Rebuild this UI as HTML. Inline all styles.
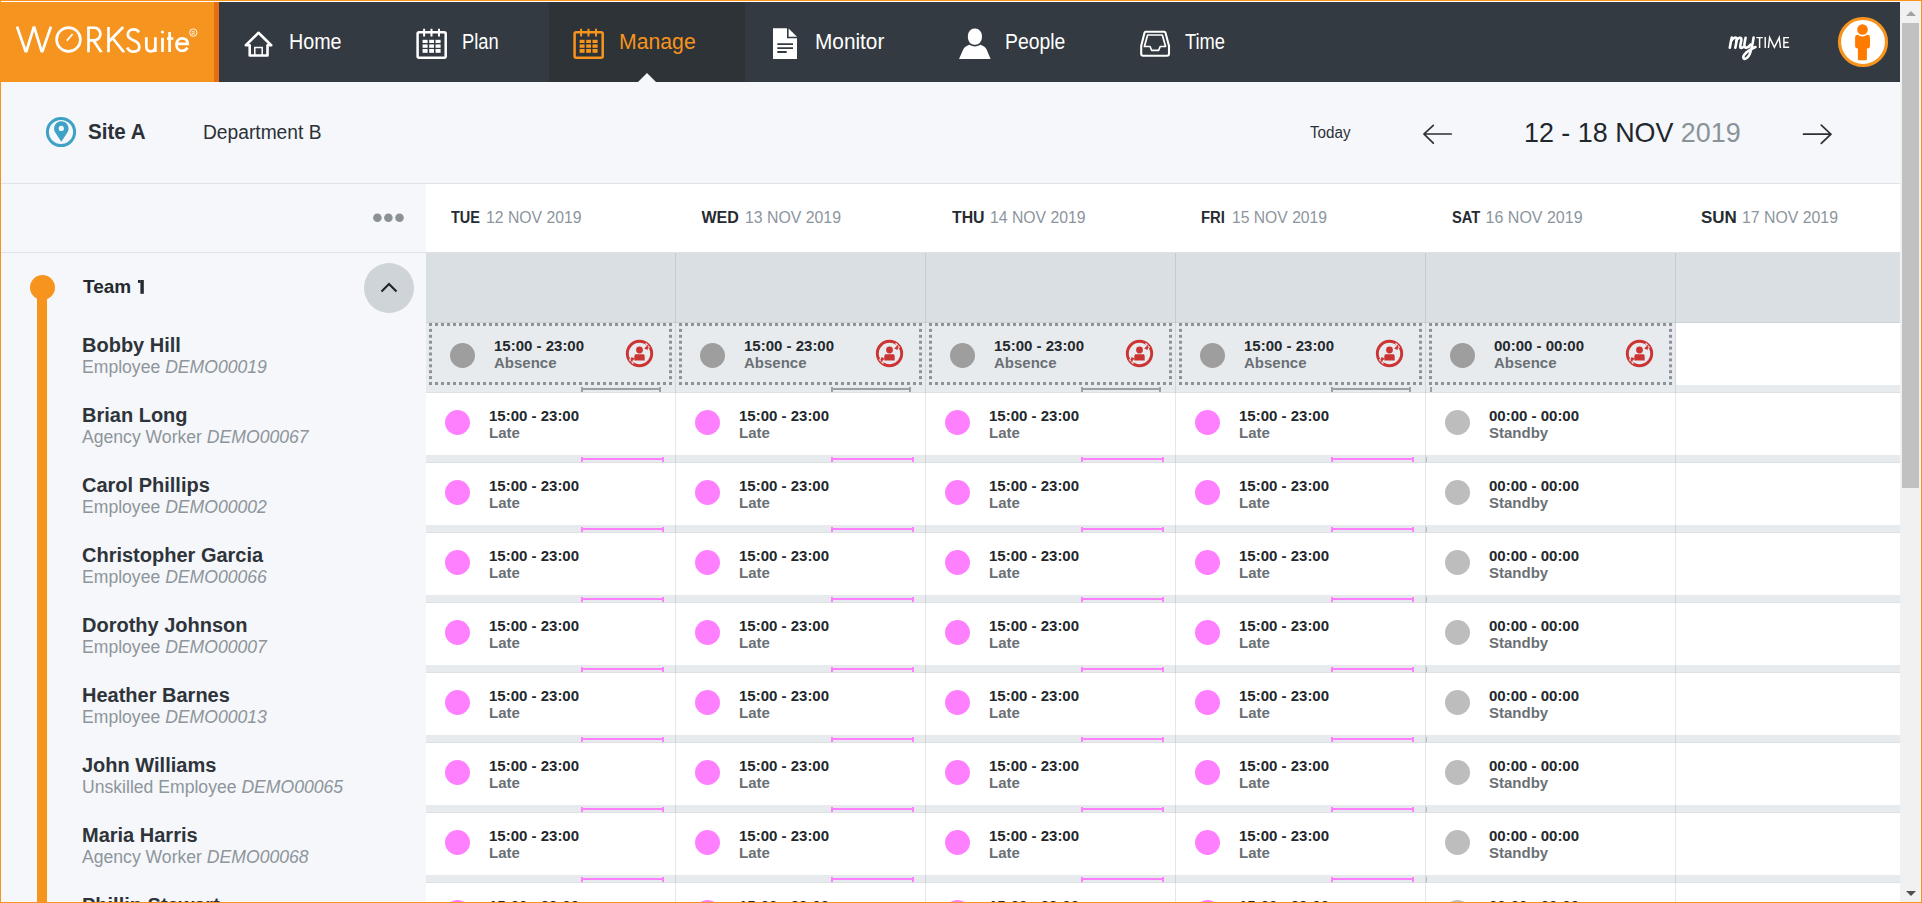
<!DOCTYPE html>
<html><head><meta charset="utf-8"><style>
*{margin:0;padding:0;box-sizing:border-box}
html,body{width:1922px;height:903px;overflow:hidden;background:#f5f7fa;font-family:"Liberation Sans",sans-serif}
.a{position:absolute}
.nav{color:#fff;font-size:22.8px;line-height:22px;white-space:nowrap;transform-origin:0 0}
.name{font-size:20px;font-weight:bold;color:#2e343a;white-space:nowrap;line-height:20px}
.sub{font-size:17.6px;color:#8e959b;white-space:nowrap;line-height:18px}
.sub i{font-style:italic}
.tm{font-size:15px;font-weight:bold;color:#23282c;white-space:nowrap;line-height:15px}
.tp{font-size:15px;font-weight:bold;color:#6a7075;white-space:nowrap;line-height:15px}
.dot{border-radius:50%}
.dh{font-size:16px;white-space:nowrap;line-height:16px}
.dh b{color:#262b30}
.dh span{color:#8c959d}
</style></head><body>
<div class="a" style="left:0;top:0;width:1922px;height:903px;border:1px solid #f7931e"></div>
<div class="a" style="left:1px;top:1px;width:1920px;height:1px;background:#fff"></div>
<div class="a" style="left:1920px;top:1px;width:1px;height:901px;background:#f5f8fb"></div>
<div class="a" style="left:1px;top:2px;width:1899px;height:80px;background:#333a41"></div>
<div class="a" style="left:1px;top:2px;width:213px;height:80px;background:#f5951f"></div>
<div class="a" style="left:214px;top:2px;width:5px;height:80px;background:#e56d12"></div>
<div class="a" style="left:549px;top:2px;width:196px;height:80px;background:#2d3337"></div>
<div class="a" style="left:638px;top:73px;width:0;height:0;border-left:9px solid transparent;border-right:9px solid transparent;border-bottom:9px solid #f5f7fa"></div>
<svg class="a" style="left:0;top:0" width="220" height="82" viewBox="0 0 220 82" fill="none" stroke="#fff" stroke-width="2.7" stroke-linejoin="miter"><defs><clipPath id="lc"><rect x="0" y="26.2" width="220" height="26.2"/></clipPath></defs><g clip-path="url(#lc)">
<polyline points="17,26.5 26,52.5 34,26.5 42,52.5 51,26.5"/>
<path d="M88.5,52.5 V27.6 H94 A6.4,6.4 0 0 1 94,40.4 H88.5 M93.5,40.4 L101.5,52.5"/>
<path d="M108.5,27 V52.5 M123.2,27 L109,41.5 M112.5,38 L124.2,52.5"/>
</g>
<circle cx="68.5" cy="39.5" r="11.9"/>
<line x1="66.8" y1="40.6" x2="72.6" y2="34" stroke-width="1.7"/>
<path d="M138.9,32.3 C137.9,30.3 136,29.4 133.5,29.4 C130.1,29.4 127.8,31.6 127.8,34.6 C127.8,38.2 131.2,39.4 134,40.6 C137.4,42 139.3,43.8 139.3,47 C139.3,50 136.8,51.6 133.5,51.6 C130.3,51.6 128.2,49.8 127.2,47.4"/>
<path d="M146.3,37.2 V46 C146.3,49.6 148,51.3 150.8,51.3 C153.6,51.3 155.4,49.6 155.4,46 V37.2 M155.4,45 V52"/>
<path d="M162.5,37.8 V52"/>
<circle cx="162.5" cy="32" r="1.6" fill="#fff" stroke="none"/>
<path d="M169.6,32 V52 M167,38.5 H173.3"/>
<path d="M176.6,43.9 H187.8 C187.8,40.5 185.4,38.3 182.2,38.3 C178.8,38.3 176.5,41 176.5,44.5 C176.5,48.2 178.9,50.8 182.2,50.8 C184.6,50.8 186.3,49.7 187.4,47.6"/>
<circle cx="193.3" cy="32.6" r="3.7" stroke-width="0.9"/>
<text x="191.6" y="34.6" font-size="5.2" fill="#fff" stroke="none" font-family="Liberation Sans">R</text>
</svg>
<svg class="a" style="left:243px;top:30px" width="32" height="29" viewBox="0 0 32 29" fill="none" stroke="#fff" stroke-width="2.6" stroke-linejoin="round">
<path d="M6.7,25.5 V15.3 H2.8 L15.5,2.8 L28.2,15.3 H24.5 V25.5 Z"/>
<path d="M11.8,25.5 V17.4 H19.2 V25.5" stroke-width="1.5" stroke-linejoin="miter"/>
</svg>
<div class="a nav" style="left:289px;top:30px;transform:scaleX(0.864)">Home</div>
<svg class="a" style="left:415px;top:28px" width="34" height="32" viewBox="0 0 34 32" fill="none" stroke="#fff" stroke-width="2.5" stroke-linejoin="round">
<rect x="2.6" y="4.2" width="28.1" height="25.5" rx="1.5"/>
<path d="M9.1,0.8 V8.6 M16.5,0.8 V8.6 M24,0.8 V8.6" stroke-width="2"/>
<g fill="#fff" stroke="none"><rect x="7.6" y="11.8" width="5" height="3.2"/><rect x="14.2" y="11.8" width="4.8" height="3.2"/><rect x="20.5" y="11.8" width="5.1" height="3.2"/>
<rect x="7.6" y="16.4" width="5" height="3.4"/><rect x="14.2" y="16.4" width="4.8" height="3.4"/><rect x="20.5" y="16.4" width="5.1" height="3.4"/>
<rect x="7.6" y="21" width="5" height="3.8"/><rect x="14.2" y="21" width="4.8" height="3.8"/><rect x="20.5" y="21" width="5.1" height="3.8"/></g>
</svg>
<div class="a nav" style="left:462px;top:30px;transform:scaleX(0.804)">Plan</div>
<svg class="a" style="left:572px;top:28px" width="34" height="32" viewBox="0 0 34 32" fill="none" stroke="#f7941d" stroke-width="2.5" stroke-linejoin="round">
<rect x="2.6" y="4.2" width="28.1" height="25.5" rx="1.5"/>
<path d="M9.1,0.8 V8.6 M16.5,0.8 V8.6 M24,0.8 V8.6" stroke-width="2"/>
<g fill="#f7941d" stroke="none"><rect x="7.6" y="11.8" width="5" height="3.2"/><rect x="14.2" y="11.8" width="4.8" height="3.2"/><rect x="20.5" y="11.8" width="5.1" height="3.2"/>
<rect x="7.6" y="16.4" width="5" height="3.4"/><rect x="14.2" y="16.4" width="4.8" height="3.4"/><rect x="20.5" y="16.4" width="5.1" height="3.4"/>
<rect x="7.6" y="21" width="5" height="3.8"/><rect x="14.2" y="21" width="4.8" height="3.8"/><rect x="20.5" y="21" width="5.1" height="3.8"/></g>
</svg>
<div class="a nav" style="left:619px;top:30px;color:#f7941d;transform:scaleX(0.931)">Manage</div>
<svg class="a" style="left:772px;top:27px" width="27" height="33" viewBox="0 0 27 33">
<path d="M1,1.2 H15 V11.3 H25 V32 H1 Z" fill="#fff"/>
<path d="M16.6,1.4 L25,9.8 H16.6 Z" fill="#fff"/>
<path d="M5.3,17.2 H21 M5.3,21.2 H21 M5.3,25 H14.7" stroke="#333a41" stroke-width="1.8"/>
</svg>
<div class="a nav" style="left:815px;top:30px;transform:scaleX(0.912)">Monitor</div>
<svg class="a" style="left:958px;top:27px" width="34" height="33" viewBox="0 0 34 33" fill="#fff">
<rect x="9.9" y="1.6" width="14" height="16.2" rx="6.5" ry="7"/>
<path d="M1,31.9 L5.2,22.5 C6.2,20.3 8,19 11.5,17.8 C13.5,19 15,19.4 16.9,19.4 C18.8,19.4 20.3,19 22.3,17.8 C25.8,19 27.6,20.3 28.6,22.5 L32.6,31.9 Z"/>
</svg>
<div class="a nav" style="left:1005px;top:30px;transform:scaleX(0.849)">People</div>
<svg class="a" style="left:1138px;top:29px" width="34" height="30" viewBox="0 0 34 30" fill="none" stroke="#fff" stroke-width="2.1" stroke-linejoin="round">
<path d="M7.6,2.8 H26.4 C27,2.8 27.3,3.2 27.5,3.8 L31,16.9 V24.7 C31,25.9 30.2,26.7 29,26.7 H5.2 C4,26.7 3.2,25.9 3.2,24.7 V16.9 L6.5,3.8 C6.7,3.2 7,2.8 7.6,2.8 Z"/>
<path d="M9.6,6 H24.3 L27.6,17.5 H22.2 L20.7,21.3 H13.6 L12.1,17.5 H6.4 Z" stroke-width="1.7"/>
</svg>
<div class="a nav" style="left:1185px;top:30px;transform:scaleX(0.804)">Time</div>
<svg class="a" style="left:1724px;top:30px" width="70" height="32" viewBox="0 0 70 32" fill="none" stroke="#fff" stroke-linecap="round" stroke-linejoin="round">
<g stroke-width="2.6">
<path d="M5.8,17.8 C6.5,14 7,10.5 7.8,7.6"/>
<path d="M7.5,10.5 C9,7.5 12.8,6.2 12.8,9.5 C12.6,12 11.8,15 11.3,17.8"/>
<path d="M12.3,10.8 C14,7.5 17.6,6.4 17.4,9.6 C17.2,12 16.2,15 16.2,16.6 C16.3,18.4 18,18.3 19.6,16.8"/>
<path d="M21.6,7.8 C21,11 20,14 20.5,16.4 C21,18.5 24.5,18 26.5,14.5"/>
<path d="M29.6,7.6 C28.8,13 27.8,19 25.5,24.5 C23.5,29 19.5,30 19.3,27.5 C19.2,24.5 24,20 31.5,17"/>
</g>
<g stroke-width="1.45" stroke-linecap="butt" stroke-linejoin="miter">
<path d="M32.4,7.6 H38.8 M35.6,7.6 V18"/>
<path d="M41.2,7 V18"/>
<path d="M44.4,18 L45.6,7.6 L50.4,17.4 L55.2,7.6 L56.5,18"/>
<path d="M65,7.6 H59.9 V17.3 H65.2 M59.9,12.5 H64.4"/>
</g>
</svg>
<svg class="a" style="left:1836px;top:15px" width="54" height="54" viewBox="0 0 54 54">
<circle cx="27" cy="27" r="23.5" fill="#fff" stroke="#f7941d" stroke-width="3.2"/>
<rect x="19.1" y="19.8" width="14.9" height="13.6" rx="2.6" fill="#ff7b00"/>
<rect x="21.9" y="30" width="9" height="15.2" rx="1" fill="#ff7b00"/>
<circle cx="26.5" cy="14.5" r="6.9" fill="#fff"/>
<circle cx="26.5" cy="14.5" r="5.3" fill="#ff7b00"/>
</svg>
<div class="a" style="left:1px;top:183px;width:1899px;height:1px;background:#dfe3e7"></div>
<svg class="a" style="left:44px;top:115px" width="34" height="34" viewBox="0 0 34 34">
<circle cx="17" cy="17" r="13.6" fill="none" stroke="#3ea2c6" stroke-width="3"/>
<path d="M17.3,26.7 L11.4,17.7 C10.5,16.3 10.1,15 10.1,13.4 C10.1,9.4 13.3,6.2 17.3,6.2 C21.3,6.2 24.5,9.4 24.5,13.4 C24.5,15 24.1,16.3 23.2,17.7 Z" fill="#3ea2c6"/>
<circle cx="17.3" cy="13.4" r="2.6" fill="#f5f7fa"/>
</svg>
<div class="a" style="left:88px;top:121px;font-size:22px;font-weight:bold;color:#2b3137;line-height:22px;transform:scaleX(0.935);transform-origin:0 0">Site A</div>
<div class="a" style="left:203px;top:122px;font-size:20px;color:#2b3137;line-height:20px;transform:scaleX(0.96);transform-origin:0 0">Department B</div>
<div class="a" style="left:1310px;top:125px;font-size:16px;color:#2b3137;line-height:16px;transform:scaleX(0.95);transform-origin:0 0">Today</div>
<svg class="a" style="left:1422px;top:123px" width="32" height="22" viewBox="0 0 32 22" fill="none" stroke="#2b3137" stroke-width="1.7" stroke-linecap="round">
<path d="M29.2,11 H2.3 M11.3,2.3 L2,11 L11.3,20.2"/>
</svg>
<div class="a" style="left:1524px;top:119px;font-size:28px;color:#1f262c;line-height:28px;white-space:nowrap;transform:scaleX(0.96);transform-origin:0 0">12 - 18 NOV <span style="color:#8a9399">2019</span></div>
<svg class="a" style="left:1802px;top:123px" width="32" height="22" viewBox="0 0 32 22" fill="none" stroke="#2b3137" stroke-width="1.7" stroke-linecap="round">
<path d="M1.5,11.2 H28.6 M19.3,2.2 L28.9,11.2 L19.3,20.4"/>
</svg>
<div class="a" style="left:426px;top:184px;width:1474px;height:68px;background:#fff"></div>
<div class="a" style="left:1px;top:252px;width:1899px;height:1px;background:#dfe3e7"></div>
<svg class="a" style="left:360px;top:200px" width="60" height="36" fill="#8c9196"><circle cx="17.4" cy="17.8" r="4.3"/><circle cx="28.4" cy="17.8" r="4.3"/><circle cx="39.5" cy="17.8" r="4.3"/></svg>
<div class="a dh" style="left:451px;top:210px;transform:scaleX(0.906);transform-origin:0 0"><b>TUE</b></div>
<div class="a dh" style="left:486px;top:210px;transform:scaleX(0.985);transform-origin:0 0"><span>12 NOV 2019</span></div>
<div class="a dh" style="left:701.4px;top:210px;transform:scaleX(1.0);transform-origin:0 0"><b>WED</b></div>
<div class="a dh" style="left:745.2px;top:210px;transform:scaleX(0.99);transform-origin:0 0"><span>13 NOV 2019</span></div>
<div class="a dh" style="left:951.8px;top:210px;transform:scaleX(0.99);transform-origin:0 0"><b>THU</b></div>
<div class="a dh" style="left:990.3px;top:210px;transform:scaleX(0.985);transform-origin:0 0"><span>14 NOV 2019</span></div>
<div class="a dh" style="left:1201.2px;top:210px;transform:scaleX(0.93);transform-origin:0 0"><b>FRI</b></div>
<div class="a dh" style="left:1231.7px;top:210px;transform:scaleX(0.98);transform-origin:0 0"><span>15 NOV 2019</span></div>
<div class="a dh" style="left:1451.8px;top:210px;transform:scaleX(0.92);transform-origin:0 0"><b>SAT</b></div>
<div class="a dh" style="left:1485.6px;top:210px;transform:scaleX(1.0);transform-origin:0 0"><span>16 NOV 2019</span></div>
<div class="a dh" style="left:1701.4px;top:210px;transform:scaleX(1.06);transform-origin:0 0"><b>SUN</b></div>
<div class="a dh" style="left:1742px;top:210px;transform:scaleX(0.99);transform-origin:0 0"><span>17 NOV 2019</span></div>
<div class="a" style="left:426px;top:253px;width:1474px;height:650px;background:#fff"></div>
<div class="a" style="left:426px;top:253px;width:1474px;height:70px;background:#dadfe3"></div>
<div class="a" style="left:426px;top:322px;width:1474px;height:1px;background:#ccd2d6"></div>
<div class="a" style="left:426px;top:385px;width:1474px;height:7px;background:#e8ebee"></div>
<div class="a" style="left:426px;top:392px;width:1474px;height:1px;background:#dde1e5"></div>
<div class="a name" style="left:82px;top:335px">Bobby Hill</div>
<div class="a sub" style="left:82px;top:358px">Employee <i>DEMO00019</i></div>
<div class="a" style="left:426px;top:323px;width:250px;height:62px;background:#e8ebee"></div>
<svg class="a" style="left:429px;top:323px" width="243" height="62" fill="#8d9399"><rect x="0" y="0" width="3" height="3"/><rect x="0" y="59" width="3" height="3"/><rect x="6" y="0" width="3" height="3"/><rect x="6" y="59" width="3" height="3"/><rect x="12" y="0" width="3" height="3"/><rect x="12" y="59" width="3" height="3"/><rect x="18" y="0" width="3" height="3"/><rect x="18" y="59" width="3" height="3"/><rect x="24" y="0" width="3" height="3"/><rect x="24" y="59" width="3" height="3"/><rect x="30" y="0" width="3" height="3"/><rect x="30" y="59" width="3" height="3"/><rect x="36" y="0" width="3" height="3"/><rect x="36" y="59" width="3" height="3"/><rect x="42" y="0" width="3" height="3"/><rect x="42" y="59" width="3" height="3"/><rect x="48" y="0" width="3" height="3"/><rect x="48" y="59" width="3" height="3"/><rect x="54" y="0" width="3" height="3"/><rect x="54" y="59" width="3" height="3"/><rect x="60" y="0" width="3" height="3"/><rect x="60" y="59" width="3" height="3"/><rect x="66" y="0" width="3" height="3"/><rect x="66" y="59" width="3" height="3"/><rect x="72" y="0" width="3" height="3"/><rect x="72" y="59" width="3" height="3"/><rect x="78" y="0" width="3" height="3"/><rect x="78" y="59" width="3" height="3"/><rect x="84" y="0" width="3" height="3"/><rect x="84" y="59" width="3" height="3"/><rect x="90" y="0" width="3" height="3"/><rect x="90" y="59" width="3" height="3"/><rect x="96" y="0" width="3" height="3"/><rect x="96" y="59" width="3" height="3"/><rect x="102" y="0" width="3" height="3"/><rect x="102" y="59" width="3" height="3"/><rect x="108" y="0" width="3" height="3"/><rect x="108" y="59" width="3" height="3"/><rect x="114" y="0" width="3" height="3"/><rect x="114" y="59" width="3" height="3"/><rect x="120" y="0" width="3" height="3"/><rect x="120" y="59" width="3" height="3"/><rect x="126" y="0" width="3" height="3"/><rect x="126" y="59" width="3" height="3"/><rect x="132" y="0" width="3" height="3"/><rect x="132" y="59" width="3" height="3"/><rect x="138" y="0" width="3" height="3"/><rect x="138" y="59" width="3" height="3"/><rect x="144" y="0" width="3" height="3"/><rect x="144" y="59" width="3" height="3"/><rect x="150" y="0" width="3" height="3"/><rect x="150" y="59" width="3" height="3"/><rect x="156" y="0" width="3" height="3"/><rect x="156" y="59" width="3" height="3"/><rect x="162" y="0" width="3" height="3"/><rect x="162" y="59" width="3" height="3"/><rect x="168" y="0" width="3" height="3"/><rect x="168" y="59" width="3" height="3"/><rect x="174" y="0" width="3" height="3"/><rect x="174" y="59" width="3" height="3"/><rect x="180" y="0" width="3" height="3"/><rect x="180" y="59" width="3" height="3"/><rect x="186" y="0" width="3" height="3"/><rect x="186" y="59" width="3" height="3"/><rect x="192" y="0" width="3" height="3"/><rect x="192" y="59" width="3" height="3"/><rect x="198" y="0" width="3" height="3"/><rect x="198" y="59" width="3" height="3"/><rect x="204" y="0" width="3" height="3"/><rect x="204" y="59" width="3" height="3"/><rect x="210" y="0" width="3" height="3"/><rect x="210" y="59" width="3" height="3"/><rect x="216" y="0" width="3" height="3"/><rect x="216" y="59" width="3" height="3"/><rect x="222" y="0" width="3" height="3"/><rect x="222" y="59" width="3" height="3"/><rect x="228" y="0" width="3" height="3"/><rect x="228" y="59" width="3" height="3"/><rect x="234" y="0" width="3" height="3"/><rect x="234" y="59" width="3" height="3"/><rect x="240" y="0" width="3" height="3"/><rect x="240" y="59" width="3" height="3"/><rect x="0" y="5.9" width="3" height="3"/><rect x="240" y="5.9" width="3" height="3"/><rect x="0" y="11.8" width="3" height="3"/><rect x="240" y="11.8" width="3" height="3"/><rect x="0" y="17.7" width="3" height="3"/><rect x="240" y="17.7" width="3" height="3"/><rect x="0" y="23.6" width="3" height="3"/><rect x="240" y="23.6" width="3" height="3"/><rect x="0" y="29.5" width="3" height="3"/><rect x="240" y="29.5" width="3" height="3"/><rect x="0" y="35.4" width="3" height="3"/><rect x="240" y="35.4" width="3" height="3"/><rect x="0" y="41.3" width="3" height="3"/><rect x="240" y="41.3" width="3" height="3"/><rect x="0" y="47.2" width="3" height="3"/><rect x="240" y="47.2" width="3" height="3"/><rect x="0" y="53.1" width="3" height="3"/><rect x="240" y="53.1" width="3" height="3"/></svg>
<div class="a dot" style="left:450px;top:343px;width:25px;height:25px;background:#9e9e9e"></div>
<div class="a tm" style="left:494px;top:338px">15:00 - 23:00</div>
<div class="a tp" style="left:494px;top:355px">Absence</div>
<svg class="a" style="left:625px;top:339px" width="29" height="29" viewBox="0 0 29 29">
<circle cx="14.5" cy="14.5" r="12.2" fill="none" stroke="#cc3333" stroke-width="2.9"/>
<circle cx="14.5" cy="11" r="3.4" fill="#cc3333"/>
<path d="M9.3,21.5 V17.5 C9.3,15.8 10,15.2 11.5,15.2 H17.5 C19,15.2 19.7,15.8 19.7,17.5 V21.5 Z" fill="#cc3333"/>
<path d="M20.6,4.2 L24.6,8.6 M4.2,20.4 L8.4,24.6" stroke="#e8ebee" stroke-width="1.3"/>
<path d="M19.2,9.6 L23.6,5.2 L22.6,11 Z M9.8,19.4 L5.4,23.8 L6.4,18 Z" fill="#cc3333"/>
</svg>
<div class="a" style="left:581px;top:388px;width:80px;height:2px;background:#9aa0a5"></div>
<div class="a" style="left:659px;top:387px;width:2px;height:5px;background:#9aa0a5"></div>
<div class="a" style="left:581px;top:387px;width:2px;height:5px;background:#9aa0a5"></div>
<div class="a" style="left:676px;top:323px;width:250px;height:62px;background:#e8ebee"></div>
<svg class="a" style="left:679px;top:323px" width="243" height="62" fill="#8d9399"><rect x="0" y="0" width="3" height="3"/><rect x="0" y="59" width="3" height="3"/><rect x="6" y="0" width="3" height="3"/><rect x="6" y="59" width="3" height="3"/><rect x="12" y="0" width="3" height="3"/><rect x="12" y="59" width="3" height="3"/><rect x="18" y="0" width="3" height="3"/><rect x="18" y="59" width="3" height="3"/><rect x="24" y="0" width="3" height="3"/><rect x="24" y="59" width="3" height="3"/><rect x="30" y="0" width="3" height="3"/><rect x="30" y="59" width="3" height="3"/><rect x="36" y="0" width="3" height="3"/><rect x="36" y="59" width="3" height="3"/><rect x="42" y="0" width="3" height="3"/><rect x="42" y="59" width="3" height="3"/><rect x="48" y="0" width="3" height="3"/><rect x="48" y="59" width="3" height="3"/><rect x="54" y="0" width="3" height="3"/><rect x="54" y="59" width="3" height="3"/><rect x="60" y="0" width="3" height="3"/><rect x="60" y="59" width="3" height="3"/><rect x="66" y="0" width="3" height="3"/><rect x="66" y="59" width="3" height="3"/><rect x="72" y="0" width="3" height="3"/><rect x="72" y="59" width="3" height="3"/><rect x="78" y="0" width="3" height="3"/><rect x="78" y="59" width="3" height="3"/><rect x="84" y="0" width="3" height="3"/><rect x="84" y="59" width="3" height="3"/><rect x="90" y="0" width="3" height="3"/><rect x="90" y="59" width="3" height="3"/><rect x="96" y="0" width="3" height="3"/><rect x="96" y="59" width="3" height="3"/><rect x="102" y="0" width="3" height="3"/><rect x="102" y="59" width="3" height="3"/><rect x="108" y="0" width="3" height="3"/><rect x="108" y="59" width="3" height="3"/><rect x="114" y="0" width="3" height="3"/><rect x="114" y="59" width="3" height="3"/><rect x="120" y="0" width="3" height="3"/><rect x="120" y="59" width="3" height="3"/><rect x="126" y="0" width="3" height="3"/><rect x="126" y="59" width="3" height="3"/><rect x="132" y="0" width="3" height="3"/><rect x="132" y="59" width="3" height="3"/><rect x="138" y="0" width="3" height="3"/><rect x="138" y="59" width="3" height="3"/><rect x="144" y="0" width="3" height="3"/><rect x="144" y="59" width="3" height="3"/><rect x="150" y="0" width="3" height="3"/><rect x="150" y="59" width="3" height="3"/><rect x="156" y="0" width="3" height="3"/><rect x="156" y="59" width="3" height="3"/><rect x="162" y="0" width="3" height="3"/><rect x="162" y="59" width="3" height="3"/><rect x="168" y="0" width="3" height="3"/><rect x="168" y="59" width="3" height="3"/><rect x="174" y="0" width="3" height="3"/><rect x="174" y="59" width="3" height="3"/><rect x="180" y="0" width="3" height="3"/><rect x="180" y="59" width="3" height="3"/><rect x="186" y="0" width="3" height="3"/><rect x="186" y="59" width="3" height="3"/><rect x="192" y="0" width="3" height="3"/><rect x="192" y="59" width="3" height="3"/><rect x="198" y="0" width="3" height="3"/><rect x="198" y="59" width="3" height="3"/><rect x="204" y="0" width="3" height="3"/><rect x="204" y="59" width="3" height="3"/><rect x="210" y="0" width="3" height="3"/><rect x="210" y="59" width="3" height="3"/><rect x="216" y="0" width="3" height="3"/><rect x="216" y="59" width="3" height="3"/><rect x="222" y="0" width="3" height="3"/><rect x="222" y="59" width="3" height="3"/><rect x="228" y="0" width="3" height="3"/><rect x="228" y="59" width="3" height="3"/><rect x="234" y="0" width="3" height="3"/><rect x="234" y="59" width="3" height="3"/><rect x="240" y="0" width="3" height="3"/><rect x="240" y="59" width="3" height="3"/><rect x="0" y="5.9" width="3" height="3"/><rect x="240" y="5.9" width="3" height="3"/><rect x="0" y="11.8" width="3" height="3"/><rect x="240" y="11.8" width="3" height="3"/><rect x="0" y="17.7" width="3" height="3"/><rect x="240" y="17.7" width="3" height="3"/><rect x="0" y="23.6" width="3" height="3"/><rect x="240" y="23.6" width="3" height="3"/><rect x="0" y="29.5" width="3" height="3"/><rect x="240" y="29.5" width="3" height="3"/><rect x="0" y="35.4" width="3" height="3"/><rect x="240" y="35.4" width="3" height="3"/><rect x="0" y="41.3" width="3" height="3"/><rect x="240" y="41.3" width="3" height="3"/><rect x="0" y="47.2" width="3" height="3"/><rect x="240" y="47.2" width="3" height="3"/><rect x="0" y="53.1" width="3" height="3"/><rect x="240" y="53.1" width="3" height="3"/></svg>
<div class="a dot" style="left:700px;top:343px;width:25px;height:25px;background:#9e9e9e"></div>
<div class="a tm" style="left:744px;top:338px">15:00 - 23:00</div>
<div class="a tp" style="left:744px;top:355px">Absence</div>
<svg class="a" style="left:875px;top:339px" width="29" height="29" viewBox="0 0 29 29">
<circle cx="14.5" cy="14.5" r="12.2" fill="none" stroke="#cc3333" stroke-width="2.9"/>
<circle cx="14.5" cy="11" r="3.4" fill="#cc3333"/>
<path d="M9.3,21.5 V17.5 C9.3,15.8 10,15.2 11.5,15.2 H17.5 C19,15.2 19.7,15.8 19.7,17.5 V21.5 Z" fill="#cc3333"/>
<path d="M20.6,4.2 L24.6,8.6 M4.2,20.4 L8.4,24.6" stroke="#e8ebee" stroke-width="1.3"/>
<path d="M19.2,9.6 L23.6,5.2 L22.6,11 Z M9.8,19.4 L5.4,23.8 L6.4,18 Z" fill="#cc3333"/>
</svg>
<div class="a" style="left:831px;top:388px;width:80px;height:2px;background:#9aa0a5"></div>
<div class="a" style="left:909px;top:387px;width:2px;height:5px;background:#9aa0a5"></div>
<div class="a" style="left:831px;top:387px;width:2px;height:5px;background:#9aa0a5"></div>
<div class="a" style="left:926px;top:323px;width:250px;height:62px;background:#e8ebee"></div>
<svg class="a" style="left:929px;top:323px" width="243" height="62" fill="#8d9399"><rect x="0" y="0" width="3" height="3"/><rect x="0" y="59" width="3" height="3"/><rect x="6" y="0" width="3" height="3"/><rect x="6" y="59" width="3" height="3"/><rect x="12" y="0" width="3" height="3"/><rect x="12" y="59" width="3" height="3"/><rect x="18" y="0" width="3" height="3"/><rect x="18" y="59" width="3" height="3"/><rect x="24" y="0" width="3" height="3"/><rect x="24" y="59" width="3" height="3"/><rect x="30" y="0" width="3" height="3"/><rect x="30" y="59" width="3" height="3"/><rect x="36" y="0" width="3" height="3"/><rect x="36" y="59" width="3" height="3"/><rect x="42" y="0" width="3" height="3"/><rect x="42" y="59" width="3" height="3"/><rect x="48" y="0" width="3" height="3"/><rect x="48" y="59" width="3" height="3"/><rect x="54" y="0" width="3" height="3"/><rect x="54" y="59" width="3" height="3"/><rect x="60" y="0" width="3" height="3"/><rect x="60" y="59" width="3" height="3"/><rect x="66" y="0" width="3" height="3"/><rect x="66" y="59" width="3" height="3"/><rect x="72" y="0" width="3" height="3"/><rect x="72" y="59" width="3" height="3"/><rect x="78" y="0" width="3" height="3"/><rect x="78" y="59" width="3" height="3"/><rect x="84" y="0" width="3" height="3"/><rect x="84" y="59" width="3" height="3"/><rect x="90" y="0" width="3" height="3"/><rect x="90" y="59" width="3" height="3"/><rect x="96" y="0" width="3" height="3"/><rect x="96" y="59" width="3" height="3"/><rect x="102" y="0" width="3" height="3"/><rect x="102" y="59" width="3" height="3"/><rect x="108" y="0" width="3" height="3"/><rect x="108" y="59" width="3" height="3"/><rect x="114" y="0" width="3" height="3"/><rect x="114" y="59" width="3" height="3"/><rect x="120" y="0" width="3" height="3"/><rect x="120" y="59" width="3" height="3"/><rect x="126" y="0" width="3" height="3"/><rect x="126" y="59" width="3" height="3"/><rect x="132" y="0" width="3" height="3"/><rect x="132" y="59" width="3" height="3"/><rect x="138" y="0" width="3" height="3"/><rect x="138" y="59" width="3" height="3"/><rect x="144" y="0" width="3" height="3"/><rect x="144" y="59" width="3" height="3"/><rect x="150" y="0" width="3" height="3"/><rect x="150" y="59" width="3" height="3"/><rect x="156" y="0" width="3" height="3"/><rect x="156" y="59" width="3" height="3"/><rect x="162" y="0" width="3" height="3"/><rect x="162" y="59" width="3" height="3"/><rect x="168" y="0" width="3" height="3"/><rect x="168" y="59" width="3" height="3"/><rect x="174" y="0" width="3" height="3"/><rect x="174" y="59" width="3" height="3"/><rect x="180" y="0" width="3" height="3"/><rect x="180" y="59" width="3" height="3"/><rect x="186" y="0" width="3" height="3"/><rect x="186" y="59" width="3" height="3"/><rect x="192" y="0" width="3" height="3"/><rect x="192" y="59" width="3" height="3"/><rect x="198" y="0" width="3" height="3"/><rect x="198" y="59" width="3" height="3"/><rect x="204" y="0" width="3" height="3"/><rect x="204" y="59" width="3" height="3"/><rect x="210" y="0" width="3" height="3"/><rect x="210" y="59" width="3" height="3"/><rect x="216" y="0" width="3" height="3"/><rect x="216" y="59" width="3" height="3"/><rect x="222" y="0" width="3" height="3"/><rect x="222" y="59" width="3" height="3"/><rect x="228" y="0" width="3" height="3"/><rect x="228" y="59" width="3" height="3"/><rect x="234" y="0" width="3" height="3"/><rect x="234" y="59" width="3" height="3"/><rect x="240" y="0" width="3" height="3"/><rect x="240" y="59" width="3" height="3"/><rect x="0" y="5.9" width="3" height="3"/><rect x="240" y="5.9" width="3" height="3"/><rect x="0" y="11.8" width="3" height="3"/><rect x="240" y="11.8" width="3" height="3"/><rect x="0" y="17.7" width="3" height="3"/><rect x="240" y="17.7" width="3" height="3"/><rect x="0" y="23.6" width="3" height="3"/><rect x="240" y="23.6" width="3" height="3"/><rect x="0" y="29.5" width="3" height="3"/><rect x="240" y="29.5" width="3" height="3"/><rect x="0" y="35.4" width="3" height="3"/><rect x="240" y="35.4" width="3" height="3"/><rect x="0" y="41.3" width="3" height="3"/><rect x="240" y="41.3" width="3" height="3"/><rect x="0" y="47.2" width="3" height="3"/><rect x="240" y="47.2" width="3" height="3"/><rect x="0" y="53.1" width="3" height="3"/><rect x="240" y="53.1" width="3" height="3"/></svg>
<div class="a dot" style="left:950px;top:343px;width:25px;height:25px;background:#9e9e9e"></div>
<div class="a tm" style="left:994px;top:338px">15:00 - 23:00</div>
<div class="a tp" style="left:994px;top:355px">Absence</div>
<svg class="a" style="left:1125px;top:339px" width="29" height="29" viewBox="0 0 29 29">
<circle cx="14.5" cy="14.5" r="12.2" fill="none" stroke="#cc3333" stroke-width="2.9"/>
<circle cx="14.5" cy="11" r="3.4" fill="#cc3333"/>
<path d="M9.3,21.5 V17.5 C9.3,15.8 10,15.2 11.5,15.2 H17.5 C19,15.2 19.7,15.8 19.7,17.5 V21.5 Z" fill="#cc3333"/>
<path d="M20.6,4.2 L24.6,8.6 M4.2,20.4 L8.4,24.6" stroke="#e8ebee" stroke-width="1.3"/>
<path d="M19.2,9.6 L23.6,5.2 L22.6,11 Z M9.8,19.4 L5.4,23.8 L6.4,18 Z" fill="#cc3333"/>
</svg>
<div class="a" style="left:1081px;top:388px;width:80px;height:2px;background:#9aa0a5"></div>
<div class="a" style="left:1159px;top:387px;width:2px;height:5px;background:#9aa0a5"></div>
<div class="a" style="left:1081px;top:387px;width:2px;height:5px;background:#9aa0a5"></div>
<div class="a" style="left:1176px;top:323px;width:250px;height:62px;background:#e8ebee"></div>
<svg class="a" style="left:1179px;top:323px" width="243" height="62" fill="#8d9399"><rect x="0" y="0" width="3" height="3"/><rect x="0" y="59" width="3" height="3"/><rect x="6" y="0" width="3" height="3"/><rect x="6" y="59" width="3" height="3"/><rect x="12" y="0" width="3" height="3"/><rect x="12" y="59" width="3" height="3"/><rect x="18" y="0" width="3" height="3"/><rect x="18" y="59" width="3" height="3"/><rect x="24" y="0" width="3" height="3"/><rect x="24" y="59" width="3" height="3"/><rect x="30" y="0" width="3" height="3"/><rect x="30" y="59" width="3" height="3"/><rect x="36" y="0" width="3" height="3"/><rect x="36" y="59" width="3" height="3"/><rect x="42" y="0" width="3" height="3"/><rect x="42" y="59" width="3" height="3"/><rect x="48" y="0" width="3" height="3"/><rect x="48" y="59" width="3" height="3"/><rect x="54" y="0" width="3" height="3"/><rect x="54" y="59" width="3" height="3"/><rect x="60" y="0" width="3" height="3"/><rect x="60" y="59" width="3" height="3"/><rect x="66" y="0" width="3" height="3"/><rect x="66" y="59" width="3" height="3"/><rect x="72" y="0" width="3" height="3"/><rect x="72" y="59" width="3" height="3"/><rect x="78" y="0" width="3" height="3"/><rect x="78" y="59" width="3" height="3"/><rect x="84" y="0" width="3" height="3"/><rect x="84" y="59" width="3" height="3"/><rect x="90" y="0" width="3" height="3"/><rect x="90" y="59" width="3" height="3"/><rect x="96" y="0" width="3" height="3"/><rect x="96" y="59" width="3" height="3"/><rect x="102" y="0" width="3" height="3"/><rect x="102" y="59" width="3" height="3"/><rect x="108" y="0" width="3" height="3"/><rect x="108" y="59" width="3" height="3"/><rect x="114" y="0" width="3" height="3"/><rect x="114" y="59" width="3" height="3"/><rect x="120" y="0" width="3" height="3"/><rect x="120" y="59" width="3" height="3"/><rect x="126" y="0" width="3" height="3"/><rect x="126" y="59" width="3" height="3"/><rect x="132" y="0" width="3" height="3"/><rect x="132" y="59" width="3" height="3"/><rect x="138" y="0" width="3" height="3"/><rect x="138" y="59" width="3" height="3"/><rect x="144" y="0" width="3" height="3"/><rect x="144" y="59" width="3" height="3"/><rect x="150" y="0" width="3" height="3"/><rect x="150" y="59" width="3" height="3"/><rect x="156" y="0" width="3" height="3"/><rect x="156" y="59" width="3" height="3"/><rect x="162" y="0" width="3" height="3"/><rect x="162" y="59" width="3" height="3"/><rect x="168" y="0" width="3" height="3"/><rect x="168" y="59" width="3" height="3"/><rect x="174" y="0" width="3" height="3"/><rect x="174" y="59" width="3" height="3"/><rect x="180" y="0" width="3" height="3"/><rect x="180" y="59" width="3" height="3"/><rect x="186" y="0" width="3" height="3"/><rect x="186" y="59" width="3" height="3"/><rect x="192" y="0" width="3" height="3"/><rect x="192" y="59" width="3" height="3"/><rect x="198" y="0" width="3" height="3"/><rect x="198" y="59" width="3" height="3"/><rect x="204" y="0" width="3" height="3"/><rect x="204" y="59" width="3" height="3"/><rect x="210" y="0" width="3" height="3"/><rect x="210" y="59" width="3" height="3"/><rect x="216" y="0" width="3" height="3"/><rect x="216" y="59" width="3" height="3"/><rect x="222" y="0" width="3" height="3"/><rect x="222" y="59" width="3" height="3"/><rect x="228" y="0" width="3" height="3"/><rect x="228" y="59" width="3" height="3"/><rect x="234" y="0" width="3" height="3"/><rect x="234" y="59" width="3" height="3"/><rect x="240" y="0" width="3" height="3"/><rect x="240" y="59" width="3" height="3"/><rect x="0" y="5.9" width="3" height="3"/><rect x="240" y="5.9" width="3" height="3"/><rect x="0" y="11.8" width="3" height="3"/><rect x="240" y="11.8" width="3" height="3"/><rect x="0" y="17.7" width="3" height="3"/><rect x="240" y="17.7" width="3" height="3"/><rect x="0" y="23.6" width="3" height="3"/><rect x="240" y="23.6" width="3" height="3"/><rect x="0" y="29.5" width="3" height="3"/><rect x="240" y="29.5" width="3" height="3"/><rect x="0" y="35.4" width="3" height="3"/><rect x="240" y="35.4" width="3" height="3"/><rect x="0" y="41.3" width="3" height="3"/><rect x="240" y="41.3" width="3" height="3"/><rect x="0" y="47.2" width="3" height="3"/><rect x="240" y="47.2" width="3" height="3"/><rect x="0" y="53.1" width="3" height="3"/><rect x="240" y="53.1" width="3" height="3"/></svg>
<div class="a dot" style="left:1200px;top:343px;width:25px;height:25px;background:#9e9e9e"></div>
<div class="a tm" style="left:1244px;top:338px">15:00 - 23:00</div>
<div class="a tp" style="left:1244px;top:355px">Absence</div>
<svg class="a" style="left:1375px;top:339px" width="29" height="29" viewBox="0 0 29 29">
<circle cx="14.5" cy="14.5" r="12.2" fill="none" stroke="#cc3333" stroke-width="2.9"/>
<circle cx="14.5" cy="11" r="3.4" fill="#cc3333"/>
<path d="M9.3,21.5 V17.5 C9.3,15.8 10,15.2 11.5,15.2 H17.5 C19,15.2 19.7,15.8 19.7,17.5 V21.5 Z" fill="#cc3333"/>
<path d="M20.6,4.2 L24.6,8.6 M4.2,20.4 L8.4,24.6" stroke="#e8ebee" stroke-width="1.3"/>
<path d="M19.2,9.6 L23.6,5.2 L22.6,11 Z M9.8,19.4 L5.4,23.8 L6.4,18 Z" fill="#cc3333"/>
</svg>
<div class="a" style="left:1331px;top:388px;width:80px;height:2px;background:#9aa0a5"></div>
<div class="a" style="left:1409px;top:387px;width:2px;height:5px;background:#9aa0a5"></div>
<div class="a" style="left:1331px;top:387px;width:2px;height:5px;background:#9aa0a5"></div>
<div class="a" style="left:1426px;top:323px;width:250px;height:62px;background:#e8ebee"></div>
<svg class="a" style="left:1429px;top:323px" width="243" height="62" fill="#8d9399"><rect x="0" y="0" width="3" height="3"/><rect x="0" y="59" width="3" height="3"/><rect x="6" y="0" width="3" height="3"/><rect x="6" y="59" width="3" height="3"/><rect x="12" y="0" width="3" height="3"/><rect x="12" y="59" width="3" height="3"/><rect x="18" y="0" width="3" height="3"/><rect x="18" y="59" width="3" height="3"/><rect x="24" y="0" width="3" height="3"/><rect x="24" y="59" width="3" height="3"/><rect x="30" y="0" width="3" height="3"/><rect x="30" y="59" width="3" height="3"/><rect x="36" y="0" width="3" height="3"/><rect x="36" y="59" width="3" height="3"/><rect x="42" y="0" width="3" height="3"/><rect x="42" y="59" width="3" height="3"/><rect x="48" y="0" width="3" height="3"/><rect x="48" y="59" width="3" height="3"/><rect x="54" y="0" width="3" height="3"/><rect x="54" y="59" width="3" height="3"/><rect x="60" y="0" width="3" height="3"/><rect x="60" y="59" width="3" height="3"/><rect x="66" y="0" width="3" height="3"/><rect x="66" y="59" width="3" height="3"/><rect x="72" y="0" width="3" height="3"/><rect x="72" y="59" width="3" height="3"/><rect x="78" y="0" width="3" height="3"/><rect x="78" y="59" width="3" height="3"/><rect x="84" y="0" width="3" height="3"/><rect x="84" y="59" width="3" height="3"/><rect x="90" y="0" width="3" height="3"/><rect x="90" y="59" width="3" height="3"/><rect x="96" y="0" width="3" height="3"/><rect x="96" y="59" width="3" height="3"/><rect x="102" y="0" width="3" height="3"/><rect x="102" y="59" width="3" height="3"/><rect x="108" y="0" width="3" height="3"/><rect x="108" y="59" width="3" height="3"/><rect x="114" y="0" width="3" height="3"/><rect x="114" y="59" width="3" height="3"/><rect x="120" y="0" width="3" height="3"/><rect x="120" y="59" width="3" height="3"/><rect x="126" y="0" width="3" height="3"/><rect x="126" y="59" width="3" height="3"/><rect x="132" y="0" width="3" height="3"/><rect x="132" y="59" width="3" height="3"/><rect x="138" y="0" width="3" height="3"/><rect x="138" y="59" width="3" height="3"/><rect x="144" y="0" width="3" height="3"/><rect x="144" y="59" width="3" height="3"/><rect x="150" y="0" width="3" height="3"/><rect x="150" y="59" width="3" height="3"/><rect x="156" y="0" width="3" height="3"/><rect x="156" y="59" width="3" height="3"/><rect x="162" y="0" width="3" height="3"/><rect x="162" y="59" width="3" height="3"/><rect x="168" y="0" width="3" height="3"/><rect x="168" y="59" width="3" height="3"/><rect x="174" y="0" width="3" height="3"/><rect x="174" y="59" width="3" height="3"/><rect x="180" y="0" width="3" height="3"/><rect x="180" y="59" width="3" height="3"/><rect x="186" y="0" width="3" height="3"/><rect x="186" y="59" width="3" height="3"/><rect x="192" y="0" width="3" height="3"/><rect x="192" y="59" width="3" height="3"/><rect x="198" y="0" width="3" height="3"/><rect x="198" y="59" width="3" height="3"/><rect x="204" y="0" width="3" height="3"/><rect x="204" y="59" width="3" height="3"/><rect x="210" y="0" width="3" height="3"/><rect x="210" y="59" width="3" height="3"/><rect x="216" y="0" width="3" height="3"/><rect x="216" y="59" width="3" height="3"/><rect x="222" y="0" width="3" height="3"/><rect x="222" y="59" width="3" height="3"/><rect x="228" y="0" width="3" height="3"/><rect x="228" y="59" width="3" height="3"/><rect x="234" y="0" width="3" height="3"/><rect x="234" y="59" width="3" height="3"/><rect x="240" y="0" width="3" height="3"/><rect x="240" y="59" width="3" height="3"/><rect x="0" y="5.9" width="3" height="3"/><rect x="240" y="5.9" width="3" height="3"/><rect x="0" y="11.8" width="3" height="3"/><rect x="240" y="11.8" width="3" height="3"/><rect x="0" y="17.7" width="3" height="3"/><rect x="240" y="17.7" width="3" height="3"/><rect x="0" y="23.6" width="3" height="3"/><rect x="240" y="23.6" width="3" height="3"/><rect x="0" y="29.5" width="3" height="3"/><rect x="240" y="29.5" width="3" height="3"/><rect x="0" y="35.4" width="3" height="3"/><rect x="240" y="35.4" width="3" height="3"/><rect x="0" y="41.3" width="3" height="3"/><rect x="240" y="41.3" width="3" height="3"/><rect x="0" y="47.2" width="3" height="3"/><rect x="240" y="47.2" width="3" height="3"/><rect x="0" y="53.1" width="3" height="3"/><rect x="240" y="53.1" width="3" height="3"/></svg>
<div class="a dot" style="left:1450px;top:343px;width:25px;height:25px;background:#9e9e9e"></div>
<div class="a tm" style="left:1494px;top:338px">00:00 - 00:00</div>
<div class="a tp" style="left:1494px;top:355px">Absence</div>
<svg class="a" style="left:1625px;top:339px" width="29" height="29" viewBox="0 0 29 29">
<circle cx="14.5" cy="14.5" r="12.2" fill="none" stroke="#cc3333" stroke-width="2.9"/>
<circle cx="14.5" cy="11" r="3.4" fill="#cc3333"/>
<path d="M9.3,21.5 V17.5 C9.3,15.8 10,15.2 11.5,15.2 H17.5 C19,15.2 19.7,15.8 19.7,17.5 V21.5 Z" fill="#cc3333"/>
<path d="M20.6,4.2 L24.6,8.6 M4.2,20.4 L8.4,24.6" stroke="#e8ebee" stroke-width="1.3"/>
<path d="M19.2,9.6 L23.6,5.2 L22.6,11 Z M9.8,19.4 L5.4,23.8 L6.4,18 Z" fill="#cc3333"/>
</svg>
<div class="a" style="left:1430px;top:387px;width:2px;height:5px;background:#9aa0a5"></div>
<div class="a" style="left:426px;top:455px;width:1474px;height:7px;background:#e8ebee"></div>
<div class="a" style="left:426px;top:462px;width:1474px;height:1px;background:#dde1e5"></div>
<div class="a name" style="left:82px;top:405px">Brian Long</div>
<div class="a sub" style="left:82px;top:428px">Agency Worker <i>DEMO00067</i></div>
<div class="a dot" style="left:445px;top:410px;width:25px;height:25px;background:#ff80ff"></div>
<div class="a tm" style="left:489px;top:408px">15:00 - 23:00</div>
<div class="a tp" style="left:489px;top:425px">Late</div>
<div class="a" style="left:581px;top:458px;width:83px;height:2px;background:#ff80ff"></div>
<div class="a" style="left:581px;top:457px;width:2px;height:5px;background:#ff80ff"></div>
<div class="a" style="left:662px;top:457px;width:2px;height:5px;background:#ff80ff"></div>
<div class="a dot" style="left:695px;top:410px;width:25px;height:25px;background:#ff80ff"></div>
<div class="a tm" style="left:739px;top:408px">15:00 - 23:00</div>
<div class="a tp" style="left:739px;top:425px">Late</div>
<div class="a" style="left:831px;top:458px;width:83px;height:2px;background:#ff80ff"></div>
<div class="a" style="left:831px;top:457px;width:2px;height:5px;background:#ff80ff"></div>
<div class="a" style="left:912px;top:457px;width:2px;height:5px;background:#ff80ff"></div>
<div class="a dot" style="left:945px;top:410px;width:25px;height:25px;background:#ff80ff"></div>
<div class="a tm" style="left:989px;top:408px">15:00 - 23:00</div>
<div class="a tp" style="left:989px;top:425px">Late</div>
<div class="a" style="left:1081px;top:458px;width:83px;height:2px;background:#ff80ff"></div>
<div class="a" style="left:1081px;top:457px;width:2px;height:5px;background:#ff80ff"></div>
<div class="a" style="left:1162px;top:457px;width:2px;height:5px;background:#ff80ff"></div>
<div class="a dot" style="left:1195px;top:410px;width:25px;height:25px;background:#ff80ff"></div>
<div class="a tm" style="left:1239px;top:408px">15:00 - 23:00</div>
<div class="a tp" style="left:1239px;top:425px">Late</div>
<div class="a" style="left:1331px;top:458px;width:83px;height:2px;background:#ff80ff"></div>
<div class="a" style="left:1331px;top:457px;width:2px;height:5px;background:#ff80ff"></div>
<div class="a" style="left:1412px;top:457px;width:2px;height:5px;background:#ff80ff"></div>
<div class="a dot" style="left:1445px;top:410px;width:25px;height:25px;background:#bdbdbd"></div>
<div class="a tm" style="left:1489px;top:408px">00:00 - 00:00</div>
<div class="a tp" style="left:1489px;top:425px">Standby</div>
<div class="a" style="left:1426px;top:457px;width:1px;height:5px;background:#b8bcc0"></div>
<div class="a" style="left:426px;top:525px;width:1474px;height:7px;background:#e8ebee"></div>
<div class="a" style="left:426px;top:532px;width:1474px;height:1px;background:#dde1e5"></div>
<div class="a name" style="left:82px;top:475px">Carol Phillips</div>
<div class="a sub" style="left:82px;top:498px">Employee <i>DEMO00002</i></div>
<div class="a dot" style="left:445px;top:480px;width:25px;height:25px;background:#ff80ff"></div>
<div class="a tm" style="left:489px;top:478px">15:00 - 23:00</div>
<div class="a tp" style="left:489px;top:495px">Late</div>
<div class="a" style="left:581px;top:528px;width:83px;height:2px;background:#ff80ff"></div>
<div class="a" style="left:581px;top:527px;width:2px;height:5px;background:#ff80ff"></div>
<div class="a" style="left:662px;top:527px;width:2px;height:5px;background:#ff80ff"></div>
<div class="a dot" style="left:695px;top:480px;width:25px;height:25px;background:#ff80ff"></div>
<div class="a tm" style="left:739px;top:478px">15:00 - 23:00</div>
<div class="a tp" style="left:739px;top:495px">Late</div>
<div class="a" style="left:831px;top:528px;width:83px;height:2px;background:#ff80ff"></div>
<div class="a" style="left:831px;top:527px;width:2px;height:5px;background:#ff80ff"></div>
<div class="a" style="left:912px;top:527px;width:2px;height:5px;background:#ff80ff"></div>
<div class="a dot" style="left:945px;top:480px;width:25px;height:25px;background:#ff80ff"></div>
<div class="a tm" style="left:989px;top:478px">15:00 - 23:00</div>
<div class="a tp" style="left:989px;top:495px">Late</div>
<div class="a" style="left:1081px;top:528px;width:83px;height:2px;background:#ff80ff"></div>
<div class="a" style="left:1081px;top:527px;width:2px;height:5px;background:#ff80ff"></div>
<div class="a" style="left:1162px;top:527px;width:2px;height:5px;background:#ff80ff"></div>
<div class="a dot" style="left:1195px;top:480px;width:25px;height:25px;background:#ff80ff"></div>
<div class="a tm" style="left:1239px;top:478px">15:00 - 23:00</div>
<div class="a tp" style="left:1239px;top:495px">Late</div>
<div class="a" style="left:1331px;top:528px;width:83px;height:2px;background:#ff80ff"></div>
<div class="a" style="left:1331px;top:527px;width:2px;height:5px;background:#ff80ff"></div>
<div class="a" style="left:1412px;top:527px;width:2px;height:5px;background:#ff80ff"></div>
<div class="a dot" style="left:1445px;top:480px;width:25px;height:25px;background:#bdbdbd"></div>
<div class="a tm" style="left:1489px;top:478px">00:00 - 00:00</div>
<div class="a tp" style="left:1489px;top:495px">Standby</div>
<div class="a" style="left:1426px;top:527px;width:1px;height:5px;background:#b8bcc0"></div>
<div class="a" style="left:426px;top:595px;width:1474px;height:7px;background:#e8ebee"></div>
<div class="a" style="left:426px;top:602px;width:1474px;height:1px;background:#dde1e5"></div>
<div class="a name" style="left:82px;top:545px">Christopher Garcia</div>
<div class="a sub" style="left:82px;top:568px">Employee <i>DEMO00066</i></div>
<div class="a dot" style="left:445px;top:550px;width:25px;height:25px;background:#ff80ff"></div>
<div class="a tm" style="left:489px;top:548px">15:00 - 23:00</div>
<div class="a tp" style="left:489px;top:565px">Late</div>
<div class="a" style="left:581px;top:598px;width:83px;height:2px;background:#ff80ff"></div>
<div class="a" style="left:581px;top:597px;width:2px;height:5px;background:#ff80ff"></div>
<div class="a" style="left:662px;top:597px;width:2px;height:5px;background:#ff80ff"></div>
<div class="a dot" style="left:695px;top:550px;width:25px;height:25px;background:#ff80ff"></div>
<div class="a tm" style="left:739px;top:548px">15:00 - 23:00</div>
<div class="a tp" style="left:739px;top:565px">Late</div>
<div class="a" style="left:831px;top:598px;width:83px;height:2px;background:#ff80ff"></div>
<div class="a" style="left:831px;top:597px;width:2px;height:5px;background:#ff80ff"></div>
<div class="a" style="left:912px;top:597px;width:2px;height:5px;background:#ff80ff"></div>
<div class="a dot" style="left:945px;top:550px;width:25px;height:25px;background:#ff80ff"></div>
<div class="a tm" style="left:989px;top:548px">15:00 - 23:00</div>
<div class="a tp" style="left:989px;top:565px">Late</div>
<div class="a" style="left:1081px;top:598px;width:83px;height:2px;background:#ff80ff"></div>
<div class="a" style="left:1081px;top:597px;width:2px;height:5px;background:#ff80ff"></div>
<div class="a" style="left:1162px;top:597px;width:2px;height:5px;background:#ff80ff"></div>
<div class="a dot" style="left:1195px;top:550px;width:25px;height:25px;background:#ff80ff"></div>
<div class="a tm" style="left:1239px;top:548px">15:00 - 23:00</div>
<div class="a tp" style="left:1239px;top:565px">Late</div>
<div class="a" style="left:1331px;top:598px;width:83px;height:2px;background:#ff80ff"></div>
<div class="a" style="left:1331px;top:597px;width:2px;height:5px;background:#ff80ff"></div>
<div class="a" style="left:1412px;top:597px;width:2px;height:5px;background:#ff80ff"></div>
<div class="a dot" style="left:1445px;top:550px;width:25px;height:25px;background:#bdbdbd"></div>
<div class="a tm" style="left:1489px;top:548px">00:00 - 00:00</div>
<div class="a tp" style="left:1489px;top:565px">Standby</div>
<div class="a" style="left:1426px;top:597px;width:1px;height:5px;background:#b8bcc0"></div>
<div class="a" style="left:426px;top:665px;width:1474px;height:7px;background:#e8ebee"></div>
<div class="a" style="left:426px;top:672px;width:1474px;height:1px;background:#dde1e5"></div>
<div class="a name" style="left:82px;top:615px">Dorothy Johnson</div>
<div class="a sub" style="left:82px;top:638px">Employee <i>DEMO00007</i></div>
<div class="a dot" style="left:445px;top:620px;width:25px;height:25px;background:#ff80ff"></div>
<div class="a tm" style="left:489px;top:618px">15:00 - 23:00</div>
<div class="a tp" style="left:489px;top:635px">Late</div>
<div class="a" style="left:581px;top:668px;width:83px;height:2px;background:#ff80ff"></div>
<div class="a" style="left:581px;top:667px;width:2px;height:5px;background:#ff80ff"></div>
<div class="a" style="left:662px;top:667px;width:2px;height:5px;background:#ff80ff"></div>
<div class="a dot" style="left:695px;top:620px;width:25px;height:25px;background:#ff80ff"></div>
<div class="a tm" style="left:739px;top:618px">15:00 - 23:00</div>
<div class="a tp" style="left:739px;top:635px">Late</div>
<div class="a" style="left:831px;top:668px;width:83px;height:2px;background:#ff80ff"></div>
<div class="a" style="left:831px;top:667px;width:2px;height:5px;background:#ff80ff"></div>
<div class="a" style="left:912px;top:667px;width:2px;height:5px;background:#ff80ff"></div>
<div class="a dot" style="left:945px;top:620px;width:25px;height:25px;background:#ff80ff"></div>
<div class="a tm" style="left:989px;top:618px">15:00 - 23:00</div>
<div class="a tp" style="left:989px;top:635px">Late</div>
<div class="a" style="left:1081px;top:668px;width:83px;height:2px;background:#ff80ff"></div>
<div class="a" style="left:1081px;top:667px;width:2px;height:5px;background:#ff80ff"></div>
<div class="a" style="left:1162px;top:667px;width:2px;height:5px;background:#ff80ff"></div>
<div class="a dot" style="left:1195px;top:620px;width:25px;height:25px;background:#ff80ff"></div>
<div class="a tm" style="left:1239px;top:618px">15:00 - 23:00</div>
<div class="a tp" style="left:1239px;top:635px">Late</div>
<div class="a" style="left:1331px;top:668px;width:83px;height:2px;background:#ff80ff"></div>
<div class="a" style="left:1331px;top:667px;width:2px;height:5px;background:#ff80ff"></div>
<div class="a" style="left:1412px;top:667px;width:2px;height:5px;background:#ff80ff"></div>
<div class="a dot" style="left:1445px;top:620px;width:25px;height:25px;background:#bdbdbd"></div>
<div class="a tm" style="left:1489px;top:618px">00:00 - 00:00</div>
<div class="a tp" style="left:1489px;top:635px">Standby</div>
<div class="a" style="left:1426px;top:667px;width:1px;height:5px;background:#b8bcc0"></div>
<div class="a" style="left:426px;top:735px;width:1474px;height:7px;background:#e8ebee"></div>
<div class="a" style="left:426px;top:742px;width:1474px;height:1px;background:#dde1e5"></div>
<div class="a name" style="left:82px;top:685px">Heather Barnes</div>
<div class="a sub" style="left:82px;top:708px">Employee <i>DEMO00013</i></div>
<div class="a dot" style="left:445px;top:690px;width:25px;height:25px;background:#ff80ff"></div>
<div class="a tm" style="left:489px;top:688px">15:00 - 23:00</div>
<div class="a tp" style="left:489px;top:705px">Late</div>
<div class="a" style="left:581px;top:738px;width:83px;height:2px;background:#ff80ff"></div>
<div class="a" style="left:581px;top:737px;width:2px;height:5px;background:#ff80ff"></div>
<div class="a" style="left:662px;top:737px;width:2px;height:5px;background:#ff80ff"></div>
<div class="a dot" style="left:695px;top:690px;width:25px;height:25px;background:#ff80ff"></div>
<div class="a tm" style="left:739px;top:688px">15:00 - 23:00</div>
<div class="a tp" style="left:739px;top:705px">Late</div>
<div class="a" style="left:831px;top:738px;width:83px;height:2px;background:#ff80ff"></div>
<div class="a" style="left:831px;top:737px;width:2px;height:5px;background:#ff80ff"></div>
<div class="a" style="left:912px;top:737px;width:2px;height:5px;background:#ff80ff"></div>
<div class="a dot" style="left:945px;top:690px;width:25px;height:25px;background:#ff80ff"></div>
<div class="a tm" style="left:989px;top:688px">15:00 - 23:00</div>
<div class="a tp" style="left:989px;top:705px">Late</div>
<div class="a" style="left:1081px;top:738px;width:83px;height:2px;background:#ff80ff"></div>
<div class="a" style="left:1081px;top:737px;width:2px;height:5px;background:#ff80ff"></div>
<div class="a" style="left:1162px;top:737px;width:2px;height:5px;background:#ff80ff"></div>
<div class="a dot" style="left:1195px;top:690px;width:25px;height:25px;background:#ff80ff"></div>
<div class="a tm" style="left:1239px;top:688px">15:00 - 23:00</div>
<div class="a tp" style="left:1239px;top:705px">Late</div>
<div class="a" style="left:1331px;top:738px;width:83px;height:2px;background:#ff80ff"></div>
<div class="a" style="left:1331px;top:737px;width:2px;height:5px;background:#ff80ff"></div>
<div class="a" style="left:1412px;top:737px;width:2px;height:5px;background:#ff80ff"></div>
<div class="a dot" style="left:1445px;top:690px;width:25px;height:25px;background:#bdbdbd"></div>
<div class="a tm" style="left:1489px;top:688px">00:00 - 00:00</div>
<div class="a tp" style="left:1489px;top:705px">Standby</div>
<div class="a" style="left:1426px;top:737px;width:1px;height:5px;background:#b8bcc0"></div>
<div class="a" style="left:426px;top:805px;width:1474px;height:7px;background:#e8ebee"></div>
<div class="a" style="left:426px;top:812px;width:1474px;height:1px;background:#dde1e5"></div>
<div class="a name" style="left:82px;top:755px">John Williams</div>
<div class="a sub" style="left:82px;top:778px">Unskilled Employee <i>DEMO00065</i></div>
<div class="a dot" style="left:445px;top:760px;width:25px;height:25px;background:#ff80ff"></div>
<div class="a tm" style="left:489px;top:758px">15:00 - 23:00</div>
<div class="a tp" style="left:489px;top:775px">Late</div>
<div class="a" style="left:581px;top:808px;width:83px;height:2px;background:#ff80ff"></div>
<div class="a" style="left:581px;top:807px;width:2px;height:5px;background:#ff80ff"></div>
<div class="a" style="left:662px;top:807px;width:2px;height:5px;background:#ff80ff"></div>
<div class="a dot" style="left:695px;top:760px;width:25px;height:25px;background:#ff80ff"></div>
<div class="a tm" style="left:739px;top:758px">15:00 - 23:00</div>
<div class="a tp" style="left:739px;top:775px">Late</div>
<div class="a" style="left:831px;top:808px;width:83px;height:2px;background:#ff80ff"></div>
<div class="a" style="left:831px;top:807px;width:2px;height:5px;background:#ff80ff"></div>
<div class="a" style="left:912px;top:807px;width:2px;height:5px;background:#ff80ff"></div>
<div class="a dot" style="left:945px;top:760px;width:25px;height:25px;background:#ff80ff"></div>
<div class="a tm" style="left:989px;top:758px">15:00 - 23:00</div>
<div class="a tp" style="left:989px;top:775px">Late</div>
<div class="a" style="left:1081px;top:808px;width:83px;height:2px;background:#ff80ff"></div>
<div class="a" style="left:1081px;top:807px;width:2px;height:5px;background:#ff80ff"></div>
<div class="a" style="left:1162px;top:807px;width:2px;height:5px;background:#ff80ff"></div>
<div class="a dot" style="left:1195px;top:760px;width:25px;height:25px;background:#ff80ff"></div>
<div class="a tm" style="left:1239px;top:758px">15:00 - 23:00</div>
<div class="a tp" style="left:1239px;top:775px">Late</div>
<div class="a" style="left:1331px;top:808px;width:83px;height:2px;background:#ff80ff"></div>
<div class="a" style="left:1331px;top:807px;width:2px;height:5px;background:#ff80ff"></div>
<div class="a" style="left:1412px;top:807px;width:2px;height:5px;background:#ff80ff"></div>
<div class="a dot" style="left:1445px;top:760px;width:25px;height:25px;background:#bdbdbd"></div>
<div class="a tm" style="left:1489px;top:758px">00:00 - 00:00</div>
<div class="a tp" style="left:1489px;top:775px">Standby</div>
<div class="a" style="left:1426px;top:807px;width:1px;height:5px;background:#b8bcc0"></div>
<div class="a" style="left:426px;top:875px;width:1474px;height:7px;background:#e8ebee"></div>
<div class="a" style="left:426px;top:882px;width:1474px;height:1px;background:#dde1e5"></div>
<div class="a name" style="left:82px;top:825px">Maria Harris</div>
<div class="a sub" style="left:82px;top:848px">Agency Worker <i>DEMO00068</i></div>
<div class="a dot" style="left:445px;top:830px;width:25px;height:25px;background:#ff80ff"></div>
<div class="a tm" style="left:489px;top:828px">15:00 - 23:00</div>
<div class="a tp" style="left:489px;top:845px">Late</div>
<div class="a" style="left:581px;top:878px;width:83px;height:2px;background:#ff80ff"></div>
<div class="a" style="left:581px;top:877px;width:2px;height:5px;background:#ff80ff"></div>
<div class="a" style="left:662px;top:877px;width:2px;height:5px;background:#ff80ff"></div>
<div class="a dot" style="left:695px;top:830px;width:25px;height:25px;background:#ff80ff"></div>
<div class="a tm" style="left:739px;top:828px">15:00 - 23:00</div>
<div class="a tp" style="left:739px;top:845px">Late</div>
<div class="a" style="left:831px;top:878px;width:83px;height:2px;background:#ff80ff"></div>
<div class="a" style="left:831px;top:877px;width:2px;height:5px;background:#ff80ff"></div>
<div class="a" style="left:912px;top:877px;width:2px;height:5px;background:#ff80ff"></div>
<div class="a dot" style="left:945px;top:830px;width:25px;height:25px;background:#ff80ff"></div>
<div class="a tm" style="left:989px;top:828px">15:00 - 23:00</div>
<div class="a tp" style="left:989px;top:845px">Late</div>
<div class="a" style="left:1081px;top:878px;width:83px;height:2px;background:#ff80ff"></div>
<div class="a" style="left:1081px;top:877px;width:2px;height:5px;background:#ff80ff"></div>
<div class="a" style="left:1162px;top:877px;width:2px;height:5px;background:#ff80ff"></div>
<div class="a dot" style="left:1195px;top:830px;width:25px;height:25px;background:#ff80ff"></div>
<div class="a tm" style="left:1239px;top:828px">15:00 - 23:00</div>
<div class="a tp" style="left:1239px;top:845px">Late</div>
<div class="a" style="left:1331px;top:878px;width:83px;height:2px;background:#ff80ff"></div>
<div class="a" style="left:1331px;top:877px;width:2px;height:5px;background:#ff80ff"></div>
<div class="a" style="left:1412px;top:877px;width:2px;height:5px;background:#ff80ff"></div>
<div class="a dot" style="left:1445px;top:830px;width:25px;height:25px;background:#bdbdbd"></div>
<div class="a tm" style="left:1489px;top:828px">00:00 - 00:00</div>
<div class="a tp" style="left:1489px;top:845px">Standby</div>
<div class="a" style="left:1426px;top:877px;width:1px;height:5px;background:#b8bcc0"></div>
<div class="a" style="left:426px;top:945px;width:1474px;height:7px;background:#e8ebee"></div>
<div class="a" style="left:426px;top:952px;width:1474px;height:1px;background:#dde1e5"></div>
<div class="a name" style="left:82px;top:895px">Phillip Stewart</div>
<div class="a sub" style="left:82px;top:918px">Employee <i>DEMO00070</i></div>
<div class="a dot" style="left:445px;top:900px;width:25px;height:25px;background:#ff80ff"></div>
<div class="a tm" style="left:489px;top:898px">15:00 - 23:00</div>
<div class="a tp" style="left:489px;top:915px">Late</div>
<div class="a" style="left:581px;top:948px;width:83px;height:2px;background:#ff80ff"></div>
<div class="a" style="left:581px;top:947px;width:2px;height:5px;background:#ff80ff"></div>
<div class="a" style="left:662px;top:947px;width:2px;height:5px;background:#ff80ff"></div>
<div class="a dot" style="left:695px;top:900px;width:25px;height:25px;background:#ff80ff"></div>
<div class="a tm" style="left:739px;top:898px">15:00 - 23:00</div>
<div class="a tp" style="left:739px;top:915px">Late</div>
<div class="a" style="left:831px;top:948px;width:83px;height:2px;background:#ff80ff"></div>
<div class="a" style="left:831px;top:947px;width:2px;height:5px;background:#ff80ff"></div>
<div class="a" style="left:912px;top:947px;width:2px;height:5px;background:#ff80ff"></div>
<div class="a dot" style="left:945px;top:900px;width:25px;height:25px;background:#ff80ff"></div>
<div class="a tm" style="left:989px;top:898px">15:00 - 23:00</div>
<div class="a tp" style="left:989px;top:915px">Late</div>
<div class="a" style="left:1081px;top:948px;width:83px;height:2px;background:#ff80ff"></div>
<div class="a" style="left:1081px;top:947px;width:2px;height:5px;background:#ff80ff"></div>
<div class="a" style="left:1162px;top:947px;width:2px;height:5px;background:#ff80ff"></div>
<div class="a dot" style="left:1195px;top:900px;width:25px;height:25px;background:#ff80ff"></div>
<div class="a tm" style="left:1239px;top:898px">15:00 - 23:00</div>
<div class="a tp" style="left:1239px;top:915px">Late</div>
<div class="a" style="left:1331px;top:948px;width:83px;height:2px;background:#ff80ff"></div>
<div class="a" style="left:1331px;top:947px;width:2px;height:5px;background:#ff80ff"></div>
<div class="a" style="left:1412px;top:947px;width:2px;height:5px;background:#ff80ff"></div>
<div class="a dot" style="left:1445px;top:900px;width:25px;height:25px;background:#bdbdbd"></div>
<div class="a tm" style="left:1489px;top:898px">00:00 - 00:00</div>
<div class="a tp" style="left:1489px;top:915px">Standby</div>
<div class="a" style="left:1426px;top:947px;width:1px;height:5px;background:#b8bcc0"></div>
<div class="a" style="left:675px;top:253px;width:1px;height:650px;background:rgba(40,75,75,0.125)"></div>
<div class="a" style="left:925px;top:253px;width:1px;height:650px;background:rgba(40,75,75,0.125)"></div>
<div class="a" style="left:1175px;top:253px;width:1px;height:650px;background:rgba(40,75,75,0.125)"></div>
<div class="a" style="left:1425px;top:253px;width:1px;height:650px;background:rgba(40,75,75,0.125)"></div>
<div class="a" style="left:1675px;top:253px;width:1px;height:650px;background:rgba(40,75,75,0.125)"></div>
<div class="a dot" style="left:30px;top:275px;width:25px;height:25px;background:#f7941d"></div>
<div class="a" style="left:37px;top:287px;width:10px;height:620px;background:#f7941d"></div>
<div class="a" style="left:83px;top:277px;font-size:19px;font-weight:bold;color:#23292f;line-height:19px;transform:scaleX(1.0);transform-origin:0 0">Team</div>
<svg class="a" style="left:136px;top:278px" width="10" height="18" fill="#23292f"><rect x="4.4" y="2" width="3.4" height="13.8"/><rect x="2" y="2" width="2.6" height="2.9"/></svg>
<div class="a dot" style="left:364px;top:263px;width:50px;height:50px;background:#ced4d8"></div>
<svg class="a" style="left:379px;top:280px" width="20" height="14" viewBox="0 0 20 14" fill="none" stroke="#22272b" stroke-width="2.2"><path d="M2.5,11.5 L10,4 L17.5,11.5"/></svg>
<div class="a" style="left:1900px;top:1px;width:20px;height:901px;background:#f1f1f1"></div>
<div class="a" style="left:1902px;top:23px;width:17px;height:465px;background:#c1c1c1"></div>
<svg class="a" style="left:1904px;top:9px" width="14" height="9"><path d="M2,7 L7,2 L12,7 Z" fill="#a3a3a3"/></svg>
<svg class="a" style="left:1904px;top:889px" width="14" height="9"><path d="M2,2 L12,2 L7,7 Z" fill="#505050"/></svg>
<div class="a" style="left:0;top:902px;width:1922px;height:1px;background:#f7931e"></div>
<div class="a" style="left:0;top:0;width:1px;height:903px;background:#f7931e"></div>
<div class="a" style="left:1921px;top:0;width:1px;height:903px;background:#f7931e"></div>
<div class="a" style="left:0;top:0;width:1922px;height:1px;background:#f7931e"></div>
</body></html>
